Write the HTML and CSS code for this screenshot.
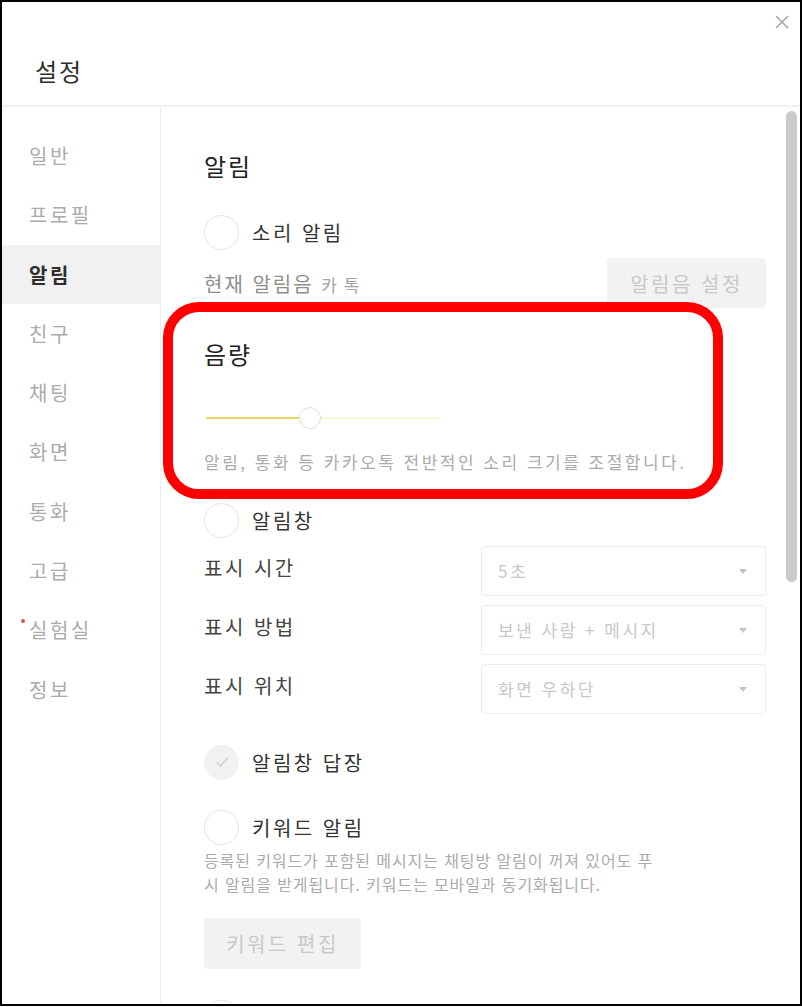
FILE: index.html
```html
<!DOCTYPE html>
<html lang="ko">
<head>
    <meta charset="UTF-8">
    <meta name="viewport" content="width=device-width, initial-scale=1.0">
    <title>설정</title>
    <link rel="stylesheet" href="styles.css">
</head>
<body>
    <div class="window">
        <div class="header">
            <div class="close-row">
                <svg class="close" width="14" height="14" viewBox="0 0 14 14">
                    <path d="M1 1 L13 13 M13 1 L1 13" stroke="#a8a8a8" stroke-width="1.6" fill="none"/>
                </svg>
            </div>
            <h1>설정</h1>
        </div>
        <div class="main">
            <ul class="sidebar">
                <li>일반</li>
                <li>프로필</li>
                <li class="active">알림</li>
                <li>친구</li>
                <li>채팅</li>
                <li>화면</li>
                <li>통화</li>
                <li>고급</li>
                <li class="new">실험실</li>
                <li>정보</li>
            </ul>
            <div class="content">
                <h2>알림</h2>
                <div class="option option-first">
                    <span class="radio"></span>
                    <span class="option-label">소리 알림</span>
                </div>
                <div class="sound-row">
                    <span class="sound-label">현재 알림음 <small>카톡</small></span>
                    <button class="btn btn-sound">알림음 설정</button>
                </div>

                <div class="volume">
                    <h2>음량</h2>
                    <div class="slider">
                        <div class="slider-fill"></div>
                        <div class="slider-thumb"></div>
                        <div class="slider-rest"></div>
                    </div>
                    <p class="desc">알림, 통화 등 카카오톡 전반적인 소리 크기를 조절합니다.</p>
                </div>

                <div class="option option-popup">
                    <span class="radio"></span>
                    <span class="option-label">알림창</span>
                </div>
                <div class="field">
                    <span class="field-label">표시 시간</span>
                    <div class="select">5초<span class="arrow"></span></div>
                </div>
                <div class="field">
                    <span class="field-label">표시 방법</span>
                    <div class="select">보낸 사람 + 메시지<span class="arrow"></span></div>
                </div>
                <div class="field">
                    <span class="field-label">표시 위치</span>
                    <div class="select">화면 우하단<span class="arrow"></span></div>
                </div>

                <div class="option option-reply">
                    <span class="radio checked">
                        <svg width="14" height="12" viewBox="0 0 14 12">
                            <path d="M1.5 6 L5.5 10 L12.5 2" stroke="#cfcfcf" stroke-width="1.6" fill="none"/>
                        </svg>
                    </span>
                    <span class="option-label">알림창 답장</span>
                </div>

                <div class="option option-keyword">
                    <span class="radio"></span>
                    <span class="option-label">키워드 알림</span>
                </div>
                <p class="desc desc-keyword">등록된 키워드가 포함된 메시지는 채팅방 알림이 꺼져 있어도 푸시 알림을 받게됩니다. 키워드는 모바일과 동기화됩니다.</p>
                <button class="btn btn-keyword">키워드 편집</button>

                <div class="option option-next">
                    <span class="radio"></span>
                </div>

                <div class="highlight"></div>
                <div class="scrollbar"></div>
            </div>
        </div>
    </div>
</body>
</html>
```

FILE: styles.css
```css
* {
    box-sizing: border-box;
}

body {
    margin: 0;
    background: #fff;
    font-family: "Noto Sans CJK KR", "Noto Sans", sans-serif;
    color: #333;
}

.window {
    width: 802px;
    height: 1006px;
    border: 2px solid #000;
    overflow: hidden;
    background: #fff;
    display: flex;
    flex-direction: column;
}

.header {
    height: 105px;
    flex-shrink: 0;
    border-bottom: 2px solid #f1f1f1;
    display: flex;
    flex-direction: column;
}

.close-row {
    display: flex;
    justify-content: flex-end;
    padding: 13px 11px 0 0;
}

.close {
    display: block;
}

h1 {
    margin: 26px 0 0 33px;
    font-size: 24px;
    font-weight: 400;
    letter-spacing: 2px;
    line-height: 32px;
    color: #2e2e2e;
}

.main {
    flex: 1;
    display: flex;
    min-height: 0;
}

.sidebar {
    list-style: none;
    margin: 0;
    padding: 19px 0 0;
    width: 159px;
    flex-shrink: 0;
    border-right: 1px solid #efefef;
}

.sidebar li {
    position: relative;
    height: 59.3px;
    line-height: 59.3px;
    padding-left: 27px;
    font-size: 20px;
    letter-spacing: 2.5px;
    color: #ababab;
}

.sidebar li.active {
    background: #f1f1f1;
    color: #2e2e2e;
    font-weight: 700;
}

.sidebar li.new::before {
    content: "";
    position: absolute;
    left: 19px;
    top: 19px;
    width: 4px;
    height: 4px;
    border-radius: 50%;
    background: #d9534f;
}

.content {
    position: relative;
    flex: 1;
    padding: 44px 34px 0 43px;
}

h2 {
    margin: 0;
    font-size: 24px;
    font-weight: 400;
    letter-spacing: 2px;
    line-height: 30px;
    color: #222;
}

.option {
    display: flex;
    align-items: center;
    gap: 13px;
    height: 36px;
}

.option-first {
    margin-top: 33px;
}

.radio {
    width: 35px;
    height: 35px;
    border-radius: 50%;
    border: 1.5px solid #e4e4e4;
    background: #fff;
    display: flex;
    align-items: center;
    justify-content: center;
    flex-shrink: 0;
}

.radio.checked {
    background: #f1f1f1;
    border-color: #f1f1f1;
}

.option-label {
    font-size: 20px;
    letter-spacing: 2.5px;
    color: #333;
}

.sound-row {
    margin-top: 8px;
    display: flex;
    justify-content: space-between;
    align-items: center;
}

.sound-label {
    font-size: 20px;
    letter-spacing: 2px;
    color: #8e8e8e;
}

.sound-label small {
    font-size: 17px;
    letter-spacing: 7px;
    color: #a5a5a5;
}

.btn {
    border: none;
    border-radius: 4px;
    background: #f2f2f2;
    color: #c8c8c8;
    font-family: inherit;
    font-size: 20px;
    letter-spacing: 2.5px;
    height: 50px;
    cursor: pointer;
}

.btn-sound {
    width: 159px;
}

.volume {
    margin-top: 31px;
}

.slider {
    margin-top: 39px;
    margin-left: 2px;
    width: 234px;
    height: 20px;
    display: flex;
    align-items: center;
}

.slider-fill {
    width: 93px;
    height: 2px;
    background: #ecd560;
}

.slider-thumb {
    width: 22px;
    height: 22px;
    border-radius: 50%;
    border: 1.5px solid #dedede;
    background: #fff;
    flex-shrink: 0;
}

.slider-rest {
    flex: 1;
    height: 2px;
    background: #faf6d8;
}

.desc {
    margin: 0;
    font-size: 17px;
    letter-spacing: 2.5px;
    line-height: 24px;
    color: #ababab;
}

.volume .desc {
    margin-top: 22px;
}

.option-popup {
    margin-top: 28px;
}

.field {
    display: flex;
    justify-content: space-between;
    align-items: center;
    margin-top: 9px;
}

.option-popup + .field {
    margin-top: 8px;
}

.field-label {
    font-size: 20px;
    letter-spacing: 2.5px;
    line-height: 44px;
    padding-bottom: 6px;
    color: #444;
}

.select {
    position: relative;
    width: 285px;
    height: 50px;
    border: 1px solid #ececec;
    border-radius: 4px;
    padding-left: 16px;
    line-height: 48px;
    font-size: 17px;
    letter-spacing: 2.5px;
    color: #c8c8c8;
}

.arrow {
    position: absolute;
    right: 18px;
    top: 22px;
    border-left: 4px solid transparent;
    border-right: 4px solid transparent;
    border-top: 5px solid #c4c4c4;
}

.option-reply {
    margin-top: 30px;
}

.option-keyword {
    margin-top: 29px;
}

.desc-keyword {
    margin-top: 3px;
    width: 462px;
    font-size: 16px;
    letter-spacing: 0.9px;
}

.btn-keyword {
    margin-top: 22px;
    width: 157px;
    height: 51px;
}

.option-next {
    margin-top: 30px;
}

/* red annotation box over the volume section */
.highlight {
    position: absolute;
    left: 2px;
    top: 195px;
    width: 560px;
    height: 197px;
    border: 10px solid #f00;
    border-radius: 36px;
    pointer-events: none;
}

.scrollbar {
    position: absolute;
    right: 3px;
    top: 4px;
    width: 11px;
    height: 471px;
    border-radius: 6px;
    background: #cacaca;
}
```
